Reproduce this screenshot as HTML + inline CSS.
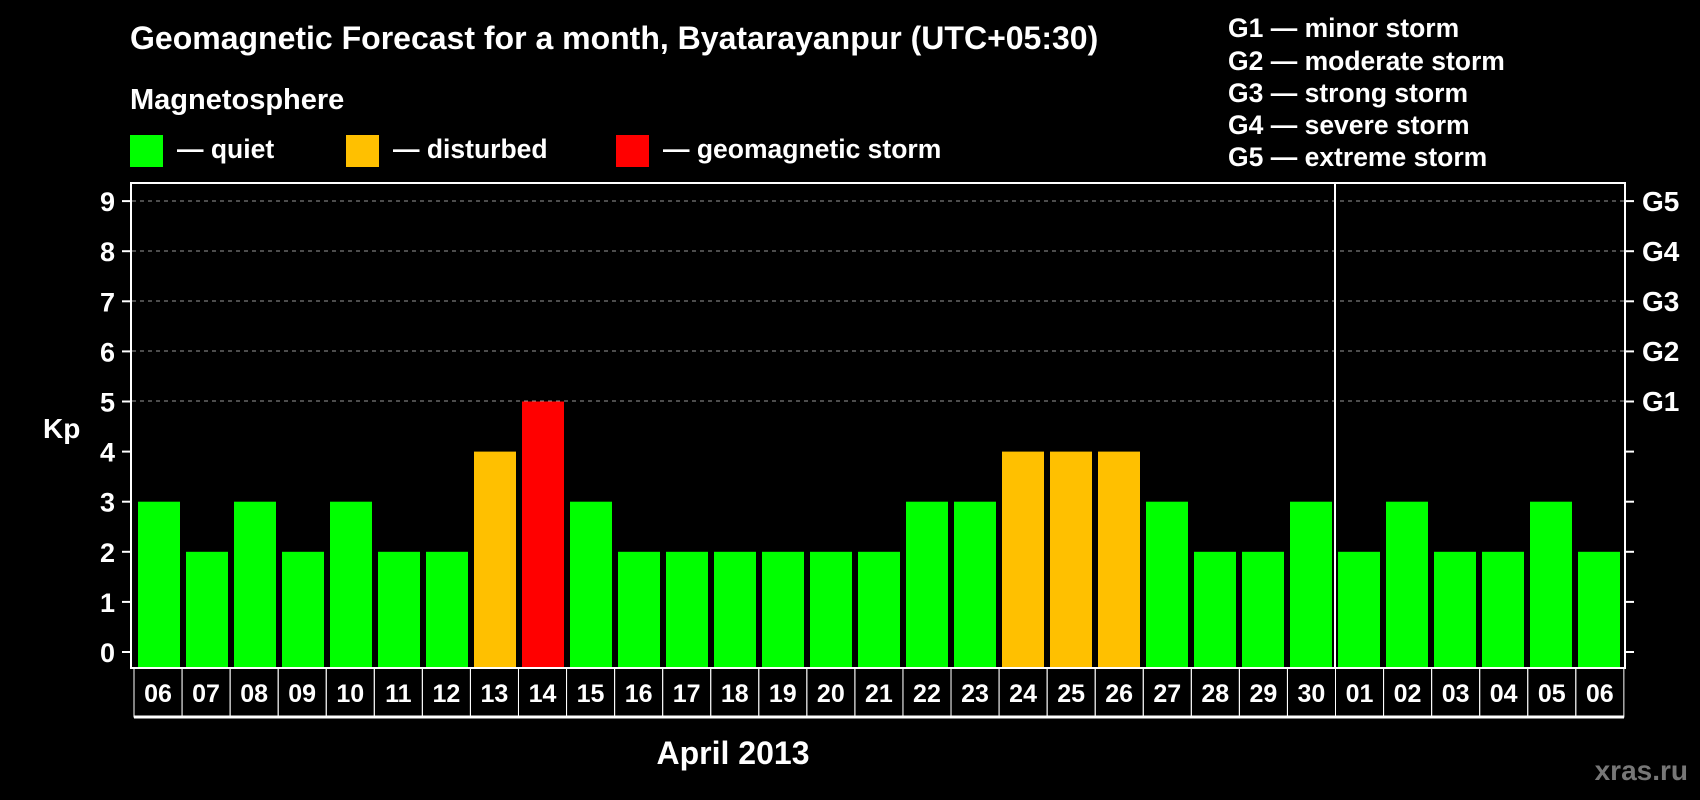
<!DOCTYPE html>
<html><head><meta charset="utf-8"><style>
html,body{margin:0;padding:0;background:#000;}
svg{display:block;}
text{font-family:"Liberation Sans",Arial,sans-serif;font-weight:bold;fill:#fff;}
</style></head><body>
<svg width="1700" height="800" viewBox="0 0 1700 800" xmlns="http://www.w3.org/2000/svg">
<rect width="1700" height="800" fill="#000"/>
<text x="130" y="49" font-size="32">Geomagnetic Forecast for a month, Byatarayanpur (UTC+05:30)</text>
<text x="130" y="109" font-size="29">Magnetosphere</text>
<rect x="130" y="135" width="33" height="32" fill="#00ff00"/>
<text x="177" y="158" font-size="26.5">— quiet</text>
<rect x="346" y="135" width="33" height="32" fill="#ffc000"/>
<text x="393" y="158" font-size="26.5">— disturbed</text>
<rect x="616" y="135" width="33" height="32" fill="#ff0000"/>
<text x="663" y="158" font-size="26.5">— geomagnetic storm</text>
<g font-size="26.5">
<text x="1228" y="37">G1 — minor storm</text>
<text x="1228" y="70">G2 — moderate storm</text>
<text x="1228" y="102">G3 — strong storm</text>
<text x="1228" y="134">G4 — severe storm</text>
<text x="1228" y="166">G5 — extreme storm</text>
</g>
<g id="grid" stroke="#999" stroke-width="1" stroke-dasharray="4,4">
<line x1="132" x2="1625" y1="201" y2="201"/>
<line x1="132" x2="1625" y1="251" y2="251"/>
<line x1="132" x2="1625" y1="301" y2="301"/>
<line x1="132" x2="1625" y1="351" y2="351"/>
<line x1="132" x2="1625" y1="401" y2="401"/>
</g>
<g id="bars"></g>
<rect x="131" y="183" width="1494" height="485" fill="none" stroke="#fff" stroke-width="2"/>
<line x1="1335" x2="1335" y1="183" y2="668" stroke="#fff" stroke-width="2"/>
<g id="ticks" stroke="#fff" stroke-width="2"></g>
<g id="ylab" font-size="27" text-anchor="end"></g>
<g id="glab" font-size="28">
<text x="1642" y="211">G5</text>
<text x="1642" y="261">G4</text>
<text x="1642" y="311">G3</text>
<text x="1642" y="361">G2</text>
<text x="1642" y="411">G1</text>
</g>
<text x="43" y="438" font-size="28">Kp</text>
<g id="cells"></g>
<text x="733" y="764" font-size="32" text-anchor="middle">April 2013</text>
<text x="1688" y="780" font-size="28" text-anchor="end" style="fill:#777">xras.ru</text>
</svg>
<script>
var ns="http://www.w3.org/2000/svg";
function el(t,a,p,txt){var e=document.createElementNS(ns,t);for(var k in a)e.setAttribute(k,a[k]);if(txt!=null)e.textContent=txt;document.getElementById(p).appendChild(e);return e;}
var vals=[3,2,3,2,3,2,2,4,5,3,2,2,2,2,2,2,3,3,4,4,4,3,2,2,3,2,3,2,2,3,2];
var days=["06","07","08","09","10","11","12","13","14","15","16","17","18","19","20","21","22","23","24","25","26","27","28","29","30","01","02","03","04","05","06"];
for(var i=0;i<31;i++){
 var c=vals[i]>=5?"#ff0000":(vals[i]==4?"#ffc000":"#00ff00");
 var ty=652-50.1*vals[i];
 el("rect",{x:138+48*i,y:ty,width:42,height:668-ty,fill:c},"bars");
 var cx=134+48.06*i;
 el("rect",{x:cx,y:668,width:48.06,height:49,fill:"none",stroke:"#fff","stroke-width":1},"cells");
 el("text",{x:cx+24,y:702,"font-size":25,"text-anchor":"middle"},"cells",days[i]);
}
el("line",{x1:134,x2:1624,y1:717,y2:717,stroke:"#fff","stroke-width":3},"cells");
for(var k=0;k<=9;k++){
 var yy=652-50.1*k;
 el("line",{x1:122,x2:131,y1:yy,y2:yy},"ticks");
 el("line",{x1:1625,x2:1634,y1:yy,y2:yy},"ticks");
 el("text",{x:115,y:yy+10},"ylab",String(k));
}
</script>
</body></html>
